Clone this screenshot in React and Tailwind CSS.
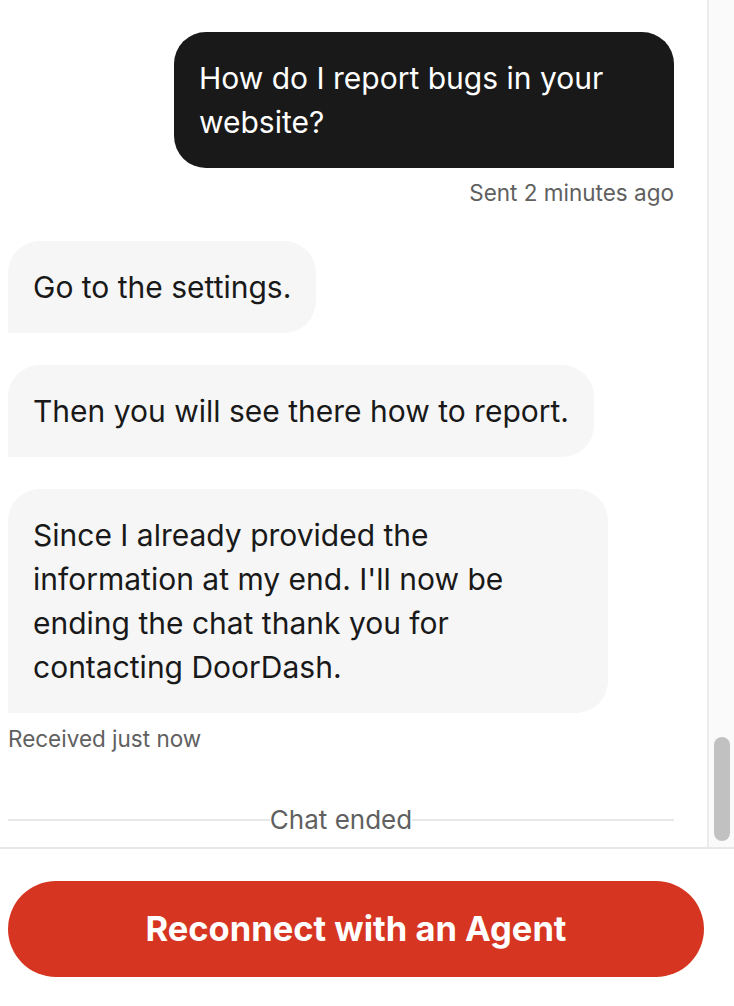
const font = { fontFamily: 'Inter, "Noto Sans", sans-serif' };

const botMessages = [
  'Go to the settings.',
  'Then you will see there how to report.',
  "Since I already provided the information at my end. I'll now be ending the chat thank you for contacting DoorDash.",
];

const App = () => {
  return (
    <div className="w-[734px] h-[1006px] bg-white flex flex-col overflow-hidden" style={font}>
      <div className="h-[849px] flex border-b-2 border-[#e8e8e8]">
        <div className="flex-1 overflow-hidden pl-2 pr-[33px] pt-8">
          <div className="flex flex-col items-end">
            <div className="max-w-[500px] bg-[#191919] text-white text-[30px] leading-[44px] px-[25px] py-6 rounded-t-[32px] rounded-bl-[32px]">
              How do I report bugs in your website?
            </div>
            <p className="mt-[11px] text-[22.5px] leading-7 text-[#606060]">Sent 2 minutes ago</p>
          </div>

          <div className="mt-[34px] flex flex-col items-start gap-8">
            {botMessages.map((m, i) => (
              <div key={i} className="max-w-[600px] bg-[#f6f6f6] text-[#191919] text-[30px] leading-[44px] px-[25px] py-6 rounded-t-[32px] rounded-br-[32px]">
                {m}
              </div>
            ))}
          </div>
          <p className="mt-[12px] text-[22.5px] leading-7 text-[#606060]">Received just now</p>

          <div className="mt-[51px] flex items-center">
            <div className="flex-1 h-[2px] bg-[#e8e8e8]" />
            <span className="text-[26px] leading-8 text-[#606060]">Chat ended</span>
            <div className="flex-1 h-[2px] bg-[#e8e8e8]" />
          </div>
        </div>
        <div className="w-[27px] border-l-2 border-[#ececec] bg-[#fafafa] flex flex-col justify-end items-center pb-[6px]">
          <div className="w-[16px] h-[104px] rounded-full bg-[#c1c1c1]" />
        </div>
      </div>

      <div className="px-2 pt-[32px]">
        <button className="w-[696px] h-[96px] rounded-full bg-[#d63621] text-white text-[34.5px] font-bold">
          Reconnect with an Agent
        </button>
      </div>
    </div>
  );
};

export default App;
